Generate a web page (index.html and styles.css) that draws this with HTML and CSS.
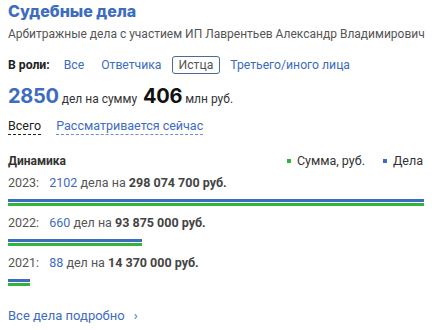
FILE: index.html
```html
<!DOCTYPE html>
<html lang="ru">
<head>
  <meta charset="UTF-8" />
  <meta name="viewport" content="width=device-width, initial-scale=1.0" />
  <title>Судебные дела</title>
  <link rel="stylesheet" href="styles.css">
</head>
<body>
  <h2 class="title">Судебные дела</h2>
  <div class="subtitle">Арбитражные дела с участием ИП Лаврентьев Александр Владимирович</div>

  <div class="roles">
    <span class="roles-label">В роли:</span>
    <span class="role">Все</span>
    <span class="role">Ответчика</span>
    <span class="role active">Истца</span>
    <span class="role">Третьего/иного лица</span>
  </div>

  <div class="stats">
    <span class="big blue">2850</span>
    <span class="small">дел на сумму</span>
    <span class="big dark">406</span>
    <span class="small">млн руб.</span>
  </div>

  <div class="tabs">
    <span class="tab current">Всего</span>
    <span class="tab">Рассматривается сейчас</span>
  </div>

  <div class="dyn-head">
    <span class="dyn-title">Динамика</span>
    <span class="legend">
      <span class="dot green"></span>Сумма, руб.
      <span class="dot blue-dot"></span>Дела
    </span>
  </div>

  <div class="year">
    <div class="year-text">2023: <a class="num">2102</a> дела на <b>298 074 700 руб.</b></div>
    <div class="bar cases" style="width:100%"></div>
    <div class="bar sum" style="width:100%"></div>
  </div>
  <div class="year">
    <div class="year-text">2022: <a class="num">660</a> дел на <b>93 875 000 руб.</b></div>
    <div class="bar cases" style="width:32.2%"></div>
    <div class="bar sum" style="width:32.2%"></div>
  </div>
  <div class="year">
    <div class="year-text">2021: <a class="num">88</a> дел на <b>14 370 000 руб.</b></div>
    <div class="bar cases" style="width:5.3%"></div>
    <div class="bar sum" style="width:5.3%"></div>
  </div>

  <a class="more">Все дела подробно <span class="chev">›</span></a>
</body>
</html>
```

FILE: styles.css
```css
body {
  font-family: Roboto, "Noto Sans", Arial, sans-serif;
  margin: 0;
  padding: 0 11px 0 8px;
  background-color: #fff;
  color: #333;
}
.title {
  margin: 0;
  font-family: Inter, Roboto, sans-serif;
  font-size: 16px;
  line-height: 22px;
  font-weight: 800;
  color: #3d6cc0;
}
.subtitle {
  margin-top: 3px;
  font-size: 12px;
  line-height: 18px;
  color: #555;
  white-space: nowrap;
}
.roles {
  display: flex;
  align-items: center;
  margin-top: 13px;
  font-size: 12.2px;
  height: 18px;
}
.roles-label {
  font-weight: 700;
  color: #222;
  margin-right: 7px;
}
.role {
  color: #3d6cc0;
  padding: 0 6px;
  margin-right: 3px;
  line-height: 16px;
  border: 1px solid transparent;
  border-radius: 3px;
}
.role.active {
  color: #555;
  border-color: #4a6a99;
}
.stats {
  display: flex;
  align-items: baseline;
  margin-top: 10px;
  height: 28px;
}
.big {
  font-family: Inter, Roboto, sans-serif;
  font-size: 20px;
  font-weight: 700;
  letter-spacing: -0.3px;
}
.blue { color: #3d6cc0; }
.dark { color: #111; margin-left: 6px; }
.small {
  font-size: 12px;
  color: #333;
  margin-left: 3px;
}
.tabs {
  display: flex;
  gap: 15px;
  margin-top: 6px;
  font-size: 12.5px;
  line-height: 16px;
}
.tab {
  color: #3d6cc0;
  border-bottom: 1px dashed #6b8fd0;
}
.tab.current {
  color: #222;
  border-bottom-color: #222;
}
.dyn-head {
  display: flex;
  justify-content: space-between;
  align-items: center;
  margin-top: 18px;
  font-size: 12px;
  line-height: 16px;
}
.dyn-title {
  font-weight: 700;
  color: #333;
}
.legend {
  color: #333;
  display: flex;
  align-items: center;
  font-size: 12.5px;
  padding-right: 1px;
}
.dot {
  width: 4px;
  height: 4px;
  margin-right: 6px;
}
.dot.green { background-color: #2db53c; }
.dot.blue-dot { background-color: #3d6cc0; margin-left: 18px; }
.year {
  margin-top: 6px;
}
.year + .year {
  margin-top: 9px;
}
.year-text {
  font-size: 12.5px;
  line-height: 16px;
  color: #555;
  margin-bottom: 8px;
}
.year-text b {
  color: #444;
}
.num {
  color: #3d6cc0;
  margin-left: 7px;
}
.bar {
  height: 3px;
}
.bar.cases { background-color: #3d6cc0; }
.bar.sum { background-color: #2db53c; margin-top: 1px; }
.more {
  display: block;
  margin-top: 22px;
  font-size: 13px;
  line-height: 16px;
  color: #3d6cc0;
}
.chev {
  margin-left: 6px;
  font-size: 13px;
}
```
